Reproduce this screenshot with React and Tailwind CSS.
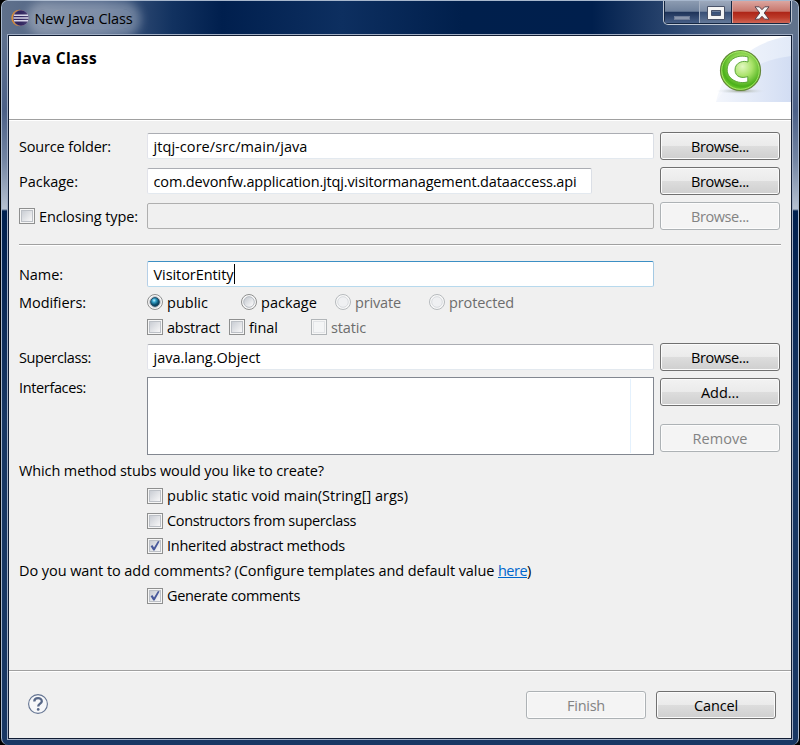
import { useLayoutEffect, useRef, useState } from "react";

// Text run whose tracking is adjusted to fill a given width.
function T({ w, children, className = "" }) {
  const ref = useRef(null);
  const [ls, setLs] = useState(0);
  useLayoutEffect(() => {
    const el = ref.current;
    const n = el.textContent.length;
    setLs((w - el.getBoundingClientRect().width) / n);
  }, [w]);
  return (
    <span ref={ref} style={{ letterSpacing: `${ls}px` }} className={`inline-block shrink-0 whitespace-pre ${className}`}>
      {children}
    </span>
  );
}

function Label({ w, children }) {
  return (
    <div className="w-32 shrink-0 pt-0.5">
      <T w={w}>{children}</T>
    </div>
  );
}

function Button({ w, disabled, children }) {
  return (
    <button
      disabled={disabled}
      className={
        "flex h-7 w-[120px] shrink-0 items-center justify-center rounded-[3px] border pt-px " +
        (disabled
          ? "border-[#adb2b5] bg-[#f4f4f4] text-[#838383] shadow-[inset_0_0_0_1px_#fcfcfc]"
          : "border-[#707070] bg-[linear-gradient(#f2f2f2_0%,#ebebeb_48%,#dddddd_50%,#cfcfcf_100%)] text-black shadow-[inset_0_0_0_1px_#fbfbfb]")
      }
    >
      <T w={w}>{children}</T>
    </button>
  );
}

function Field({ children, className = "w-[507px]", tone = "border-t-[#abadb3] border-r-[#dbdfe6] border-b-[#e3e9ef] border-l-[#e2e3ea] bg-white" }) {
  return <div className={`flex h-[26px] shrink-0 items-center rounded-[2px] border pt-0.5 pl-[5.5px] ${tone} ${className}`}>{children}</div>;
}

function Check({ checked, disabled }) {
  return (
    <svg width="16" height="16" viewBox="0 0 16 16" className="shrink-0">
      <defs>
        <linearGradient id="box" x1="0" y1="0" x2="1" y2="1">
          <stop offset="0" stopColor="#c7cbd2" />
          <stop offset="0.9" stopColor="#f5f5f6" />
        </linearGradient>
      </defs>
      <rect x=".5" y=".5" width="15" height="15" fill="#f6f6f6" stroke={disabled ? "#b1b5b8" : "#8e8f8f"} />
      <rect x="2.5" y="2.5" width="11" height="11" fill={disabled ? "#f4f5f6" : "url(#box)"} stroke={disabled ? "#e2e4e7" : "#bcc0c6"} />
      {checked && <path d="M3.6 8.3 5.4 6.9 7 9.4 10.8 3.2 12.4 3 12 4.4 7.6 12.4 6.3 12.4Z" fill="#48599b" />}
    </svg>
  );
}

function Radio({ checked, disabled }) {
  return (
    <svg width="16" height="16" viewBox="0 0 16 16" className="shrink-0">
      <defs>
        <radialGradient id="dot" cx=".4" cy=".32" r=".7">
          <stop offset="0" stopColor="#c5f4ff" />
          <stop offset="0.3" stopColor="#36a5cf" />
          <stop offset="0.7" stopColor="#0e526f" />
          <stop offset="1" stopColor="#0b3a57" />
        </radialGradient>
        <linearGradient id="well" x1="0" y1="0" x2="1" y2="1">
          <stop offset="0" stopColor="#bfc4cb" />
          <stop offset="0.8" stopColor="#f5f5f6" />
        </linearGradient>
      </defs>
      <circle cx="8" cy="8" r="7.5" fill="#f8f8f8" stroke={disabled ? "#b6babd" : "#8e8f8f"} />
      <circle cx="8" cy="8" r="5.3" fill={disabled ? "#eff0f2" : "url(#well)"} stroke={disabled ? "#d8dbdf" : "#b7bcc3"} />
      {checked && <circle cx="8" cy="8" r="4.4" fill="url(#dot)" stroke="#173e58" strokeWidth=".8" />}
    </svg>
  );
}

function Option({ type, w, checked, disabled, className = "", textClass = "", children }) {
  return (
    <div className={`flex shrink-0 items-center gap-1 ${disabled ? "text-[#6d6d6d]" : ""} ${className}`}>
      {type === "radio" ? <Radio checked={checked} disabled={disabled} /> : <Check checked={checked} disabled={disabled} />}
      <T w={w} className={textClass}>{children}</T>
    </div>
  );
}

function EclipseLogo() {
  return (
    <svg width="18" height="18" viewBox="0 0 18 18" className="shrink-0">
      <circle cx="8.5" cy="9" r="8.2" fill="#d98c35" />
      <circle cx="10" cy="9" r="8" fill="#6b6390" />
      <circle cx="10" cy="9" r="7.5" fill="#30255f" />
      <path d="M3 6.2h14M2.5 9h15M3 11.8h14" stroke="#d5d4e8" strokeWidth="1.5" />
    </svg>
  );
}

function WindowControls() {
  return (
    <div className="mr-1.5 flex h-6 w-[129px] overflow-hidden rounded-b-[5px] border border-t-0 border-[#c2cad6] bg-[#152742] p-px pt-0">
      <div className="flex w-[34px] items-end justify-center bg-[linear-gradient(#8c9bb1_0%,#6f819c_47%,#1d3258_50%,#475f87_100%)] pb-[3px]">
        <div className="h-1 w-4 border border-[#6f7d98] bg-[#8995ac]" />
      </div>
      <div className="flex w-8 items-center justify-center border-l border-[#a6b1c2] bg-[linear-gradient(#9da9bc_0%,#7c8ca5_47%,#374e75_50%,#647999_100%)] pt-0.5">
        <svg width="18" height="14" viewBox="0 0 18 14" className="shrink-0">
          <path d="M.5.5h17v13H.5zM4.5 4.5h9v5h-9z" fill="#f5f5f5" fillRule="evenodd" stroke="#4a5369" />
        </svg>
      </div>
      <div className="ml-px flex flex-1 items-center justify-center border-l border-[#dba8a1] bg-[linear-gradient(#dba6a0_0%,#c8766c_47%,#ad2417_50%,#bc3a29_75%,#cf6656_100%)] pt-0.5">
        <svg width="16" height="14" viewBox="0 0 16 14">
          <path d="M1 .8h4.3L8 3.7 10.7.8H15L10.2 7l4.8 6.2h-4.3L8 10.3l-2.7 2.9H1L5.8 7Z" fill="#f7f7f7" stroke="#59434d" />
        </svg>
      </div>
    </div>
  );
}

function ClassBanner() {
  return (
    <svg width="76" height="66" viewBox="0 0 76 66" className="shrink-0">
      <defs>
        <linearGradient id="sweep" x1="0" y1="0" x2="1" y2="0">
          <stop offset="0" stopColor="#f6f8fd" />
          <stop offset="1" stopColor="#e2eaf8" />
        </linearGradient>
        <linearGradient id="sweep2" x1="0" y1="0" x2="1" y2="0">
          <stop offset="0" stopColor="#f3f6fc" />
          <stop offset="1" stopColor="#d2ddf3" />
        </linearGradient>
        <radialGradient id="ball" cx=".55" cy=".4" r=".62">
          <stop offset="0" stopColor="#e2f8c0" />
          <stop offset="0.4" stopColor="#a8e268" />
          <stop offset="0.8" stopColor="#4bb01a" />
          <stop offset="1" stopColor="#7dd636" />
        </radialGradient>
        <radialGradient id="shade">
          <stop offset="0" stopColor="#98a08e" />
          <stop offset="1" stopColor="#dfe6f2" stopOpacity="0" />
        </radialGradient>
      </defs>
      <path d="M1 66C8 34 34 5 76 0V66Z" fill="url(#sweep)" />
      <path d="M1 66C18 39 44 24 76 20V66Z" fill="url(#sweep2)" />
      <ellipse cx="26" cy="55" rx="25" ry="3" fill="url(#shade)" />
      <circle cx="25.5" cy="34.5" r="20" fill="url(#ball)" stroke="#64863a" strokeWidth="1.2" />
      <circle cx="25.5" cy="34.5" r="18.8" fill="none" stroke="#b4ef75" strokeWidth=".8" />
      <path d="M33 21V26C30.5 25.2 28 25.2 25.8 26 22 27.3 20 30.2 20 34 20 37.6 21.8 40 25 41 27.6 41.8 30.2 41.4 32.8 40.6V45.8C28 47.3 22.5 46.6 18.3 44 14.4 41.6 12.2 38.2 12.2 33.8 12.2 28.8 14.8 24.6 19 22.2 23.2 19.8 28.5 19.6 33 21Z" fill="#fff" stroke="#4f9d2c" strokeWidth=".9" />
    </svg>
  );
}

export default function App() {
  return (
    <div className="h-[745px] w-[800px] overflow-hidden bg-black pr-px pl-px font-['Open_Sans','Noto_Sans',sans-serif] text-[14.5px] leading-5 text-black">
      <div className="flex h-full flex-col rounded-[7px] border-x border-t border-[#a7b7cd] bg-[linear-gradient(#667790_0px,#4c6188_110px,#7486a3_160px,#b6c1d1_208px,#00204f_210px,#183764_420px,#183764_100%)]">
        <div className="flex h-[33px] shrink-0 items-start justify-between rounded-t-[6px] bg-[linear-gradient(90deg,#5f708b_0px,#465d82_100px,#123260_170px,#001f4e_220px,#0d2f60_340px,#001f4c_460px,#001f4d_590px,#365078_690px,#60728c_770px)]">
          <div className="ml-[9px] flex h-[34px] items-center gap-[5.5px]">
            <EclipseLogo />
            <div className="mt-0.5 rounded-full bg-white/30 shadow-[0_0_10px_8px_rgba(255,255,255,0.3)]">
              <T w={98} className="leading-3">New Java Class</T>
            </div>
          </div>
          <WindowControls />
        </div>

        <div className="mx-[5px] flex h-[706px] shrink-0 flex-col border border-[#a1aec4]">
          <div className="flex h-full flex-col border border-[#101c33] bg-[#f0f0f0]">
            <div className="flex h-[83px] shrink-0 items-start justify-between bg-white">
              <T w={80} className="mt-3 ml-2 text-[15.5px] font-bold">Java Class</T>
              <ClassBanner />
            </div>
            <div className="h-0.5 shrink-0 border-t border-[#a0a0a0] bg-white" />

            <div className="flex h-[549px] shrink-0 flex-col pt-[11px] pr-2.5 pl-2.5">
              <div className="flex h-7 items-center">
                <Label w={92}>Source folder:</Label>
                <Field><T w={154}>jtqj-core/src/main/java</T></Field>
                <div className="ml-1.5"><Button w={58}>Browse...</Button></div>
              </div>
              <div className="mt-[7px] flex h-7 items-center">
                <Label w={59}>Package:</Label>
                <Field className="w-[445px]"><T w={423}>com.devonfw.application.jtqj.visitormanagement.dataaccess.api</T></Field>
                <div className="ml-[68px]"><Button w={58}>Browse...</Button></div>
              </div>
              <div className="mt-[7px] flex h-7 items-center">
                <div className="flex w-32 shrink-0 items-center gap-1">
                  <Check />
                  <T w={99} className="pt-0.5">Enclosing type:</T>
                </div>
                <Field tone="border-[#afafaf] bg-[#f0f0f0]" />
                <div className="ml-1.5"><Button w={58} disabled>Browse...</Button></div>
              </div>
              <div className="mt-3.5 h-0.5 shrink-0 border-t border-[#a0a0a0] bg-white" />

              <div className="mt-[15px] flex h-[26px] shrink-0 items-center">
                <Label w={44}>Name:</Label>
                <Field tone="border-t-[#3c8fc4] border-r-[#a4c9e3] border-b-[#b7d9ed] border-l-[#b5cfe7] bg-white">
                  <T w={80}>VisitorEntity</T>
                  <span className="-mt-0.5 h-5 w-px bg-black" />
                </Field>
              </div>
              <div className="mt-0.5 flex h-[26px] shrink-0 items-center">
                <Label w={67}>Modifiers:</Label>
                <Option className="w-[94px]" textClass="pt-0.5" type="radio" w={41} checked>public</Option>
                <Option className="w-[94px]" textClass="pt-0.5" type="radio" w={56}>package</Option>
                <Option className="w-[94px]" textClass="pt-0.5" type="radio" w={46} disabled>private</Option>
                <Option type="radio" textClass="pt-0.5" w={65} disabled>protected</Option>
              </div>
              <div className="flex h-6 shrink-0 items-center pl-32">
                <Option className="w-[82px]" textClass="pt-0.5" w={53}>abstract</Option>
                <Option className="w-[82px]" textClass="pt-0.5" w={29}>final</Option>
                <Option w={35} textClass="pt-0.5" disabled>static</Option>
              </div>
              <div className="mt-1 flex h-7 shrink-0 items-center">
                <Label w={72}>Superclass:</Label>
                <Field><T w={107}>java.lang.Object</T></Field>
                <div className="ml-1.5"><Button w={58}>Browse...</Button></div>
              </div>
              <div className="mt-1.5 flex h-[78px] shrink-0">
                <div className="w-32 shrink-0 pt-px"><T w={67}>Interfaces:</T></div>
                <div className="flex w-[507px] shrink-0 border border-[#828790] bg-white px-px py-px">
                  <div className="w-[482px] border-r border-[#e4f1fd]" />
                </div>
                <div className="ml-1.5 flex flex-col gap-[18px] pt-px">
                  <Button w={38}>Add...</Button>
                  <Button w={55} disabled>Remove</Button>
                </div>
              </div>
              <div className="mt-[3px] flex h-[25px] shrink-0 items-center">
                <T w={305}>Which method stubs would you like to create?</T>
              </div>
              <div className="flex h-[75px] shrink-0 flex-col pl-32">
                <Option className="h-[25px]" w={241}>public static void main(String[] args)</Option>
                <Option className="h-[25px]" w={189}>Constructors from superclass</Option>
                <Option className="h-[25px]" w={178} checked>Inherited abstract methods</Option>
              </div>
              <div className="flex h-[25px] shrink-0 items-center">
                <T w={479}>Do you want to add comments? (Configure templates and default value </T>
                <T w={29} className="text-[#0066cc] underline">here</T>
                <T w={5}>)</T>
              </div>
              <Option className="h-[25px] pl-32" w={133} checked>Generate comments</Option>
            </div>

            <div className="h-0.5 shrink-0 border-t border-[#a0a0a0] bg-white" />
            <div className="flex h-[66px] shrink-0 items-center pr-[15px] pl-[19px]">
              <svg width="20" height="20" viewBox="0 0 20 20" className="mb-0.5">
                <circle cx="10" cy="10" r="9.4" fill="#f6f7f9" stroke="#637391" strokeWidth="1.1" />
                <path d="M6.3 7.4C6.3 3 13.8 3 13.8 7.2 13.8 9.7 10.2 9.7 10.2 12.6" fill="none" stroke="#586888" strokeWidth="2.3" />
                <circle cx="10.2" cy="15.4" r="1.35" fill="#586888" />
              </svg>
              <div className="ml-auto flex gap-2.5">
                <Button w={38} disabled>Finish</Button>
                <Button w={44}>Cancel</Button>
              </div>
            </div>
          </div>
        </div>
      </div>
    </div>
  );
}
